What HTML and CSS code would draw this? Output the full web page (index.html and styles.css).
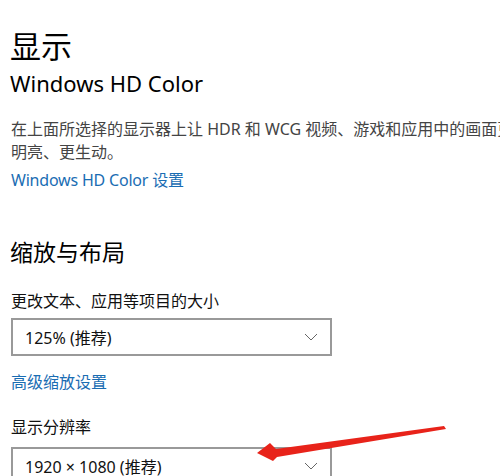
FILE: index.html
```html
<!DOCTYPE html>
<html lang="zh-CN">
<head>
<meta charset="utf-8">
<link rel="stylesheet" href="styles.css">
</head>
<body>
<main class="page">
  <h1 class="title">显示</h1>
  <h2 class="subtitle">Windows HD Color</h2>
  <p class="desc">在上面所选择的显示器上让 HDR 和 WCG 视频、游戏和应用中的画面更明亮、更生动。</p>
  <a class="link link-hd">Windows HD Color 设置</a>
  <h2 class="section">缩放与布局</h2>
  <div class="label label-scale">更改文本、应用等项目的大小</div>
  <div class="select select-scale">
    <span class="select-text">125% (推荐)</span>
    <svg class="chev" width="14" height="8" viewBox="0 0 14 8"><path d="M1 1 L7 7 L13 1" fill="none" stroke="#666" stroke-width="1"/></svg>
  </div>
  <a class="link link-adv">高级缩放设置</a>
  <div class="label label-res">显示分辨率</div>
  <div class="select select-res">
    <span class="select-text">1920 × 1080 (推荐)</span>
    <svg class="chev" width="14" height="8" viewBox="0 0 14 8"><path d="M1 1 L7 7 L13 1" fill="none" stroke="#666" stroke-width="1"/></svg>
  </div>
</main>
<svg class="arrow" width="500" height="476" viewBox="0 0 500 476">
  <polygon points="444,426 446,429 277,457 273,461 257,453 270,443 276,449" fill="#e8231a"/>
</svg>
</body>
</html>
```
FILE: styles.css
```css
html, body {
  margin: 0;
  padding: 0;
  background: #fff;
  overflow: hidden;
}
body {
  width: 500px;
  height: 476px;
  position: relative;
  font-family: "Noto Sans", "Noto Sans CJK SC", sans-serif;
  color: #000;
}
.page {
  width: 560px;
  padding-left: 11px;
  display: flex;
  flex-direction: column;
  align-items: flex-start;
}
.title {
  margin: 26px 0 0 -1px;
  font-size: 31px;
  line-height: 40px;
  font-weight: 400;
}
.subtitle {
  margin: 3px 0 0 -1px;
  font-size: 22px;
  line-height: 28px;
  font-weight: 400;
}
.desc {
  margin: 21px 0 0 0;
  width: 518px;
  font-size: 16px;
  line-height: 23px;
  color: #444;
}
.link {
  color: #1a6db3;
  font-size: 16px;
  line-height: 23px;
}
.link-hd { margin-top: 5px; letter-spacing: -0.2px; }
.section {
  margin: 45px 0 0 -1px;
  font-size: 23px;
  line-height: 30px;
  font-weight: 400;
}
.label {
  font-size: 16px;
  line-height: 23px;
  color: #111;
}
.label-scale { margin-top: 23px; }
.select {
  box-sizing: border-box;
  width: 321px;
  height: 38px;
  border: 2px solid #999;
  display: flex;
  align-items: center;
  justify-content: space-between;
  padding: 0 12px 0 12px;
  font-size: 16px;
  color: #111;
}
.select-scale { margin-top: 5px; }
.link-adv { margin-top: 15px; }
.label-res { margin-top: 22px; }
.select-res { margin-top: 8px; }
.chev { display: block; }
.arrow {
  position: absolute;
  left: 0;
  top: 0;
}
```
